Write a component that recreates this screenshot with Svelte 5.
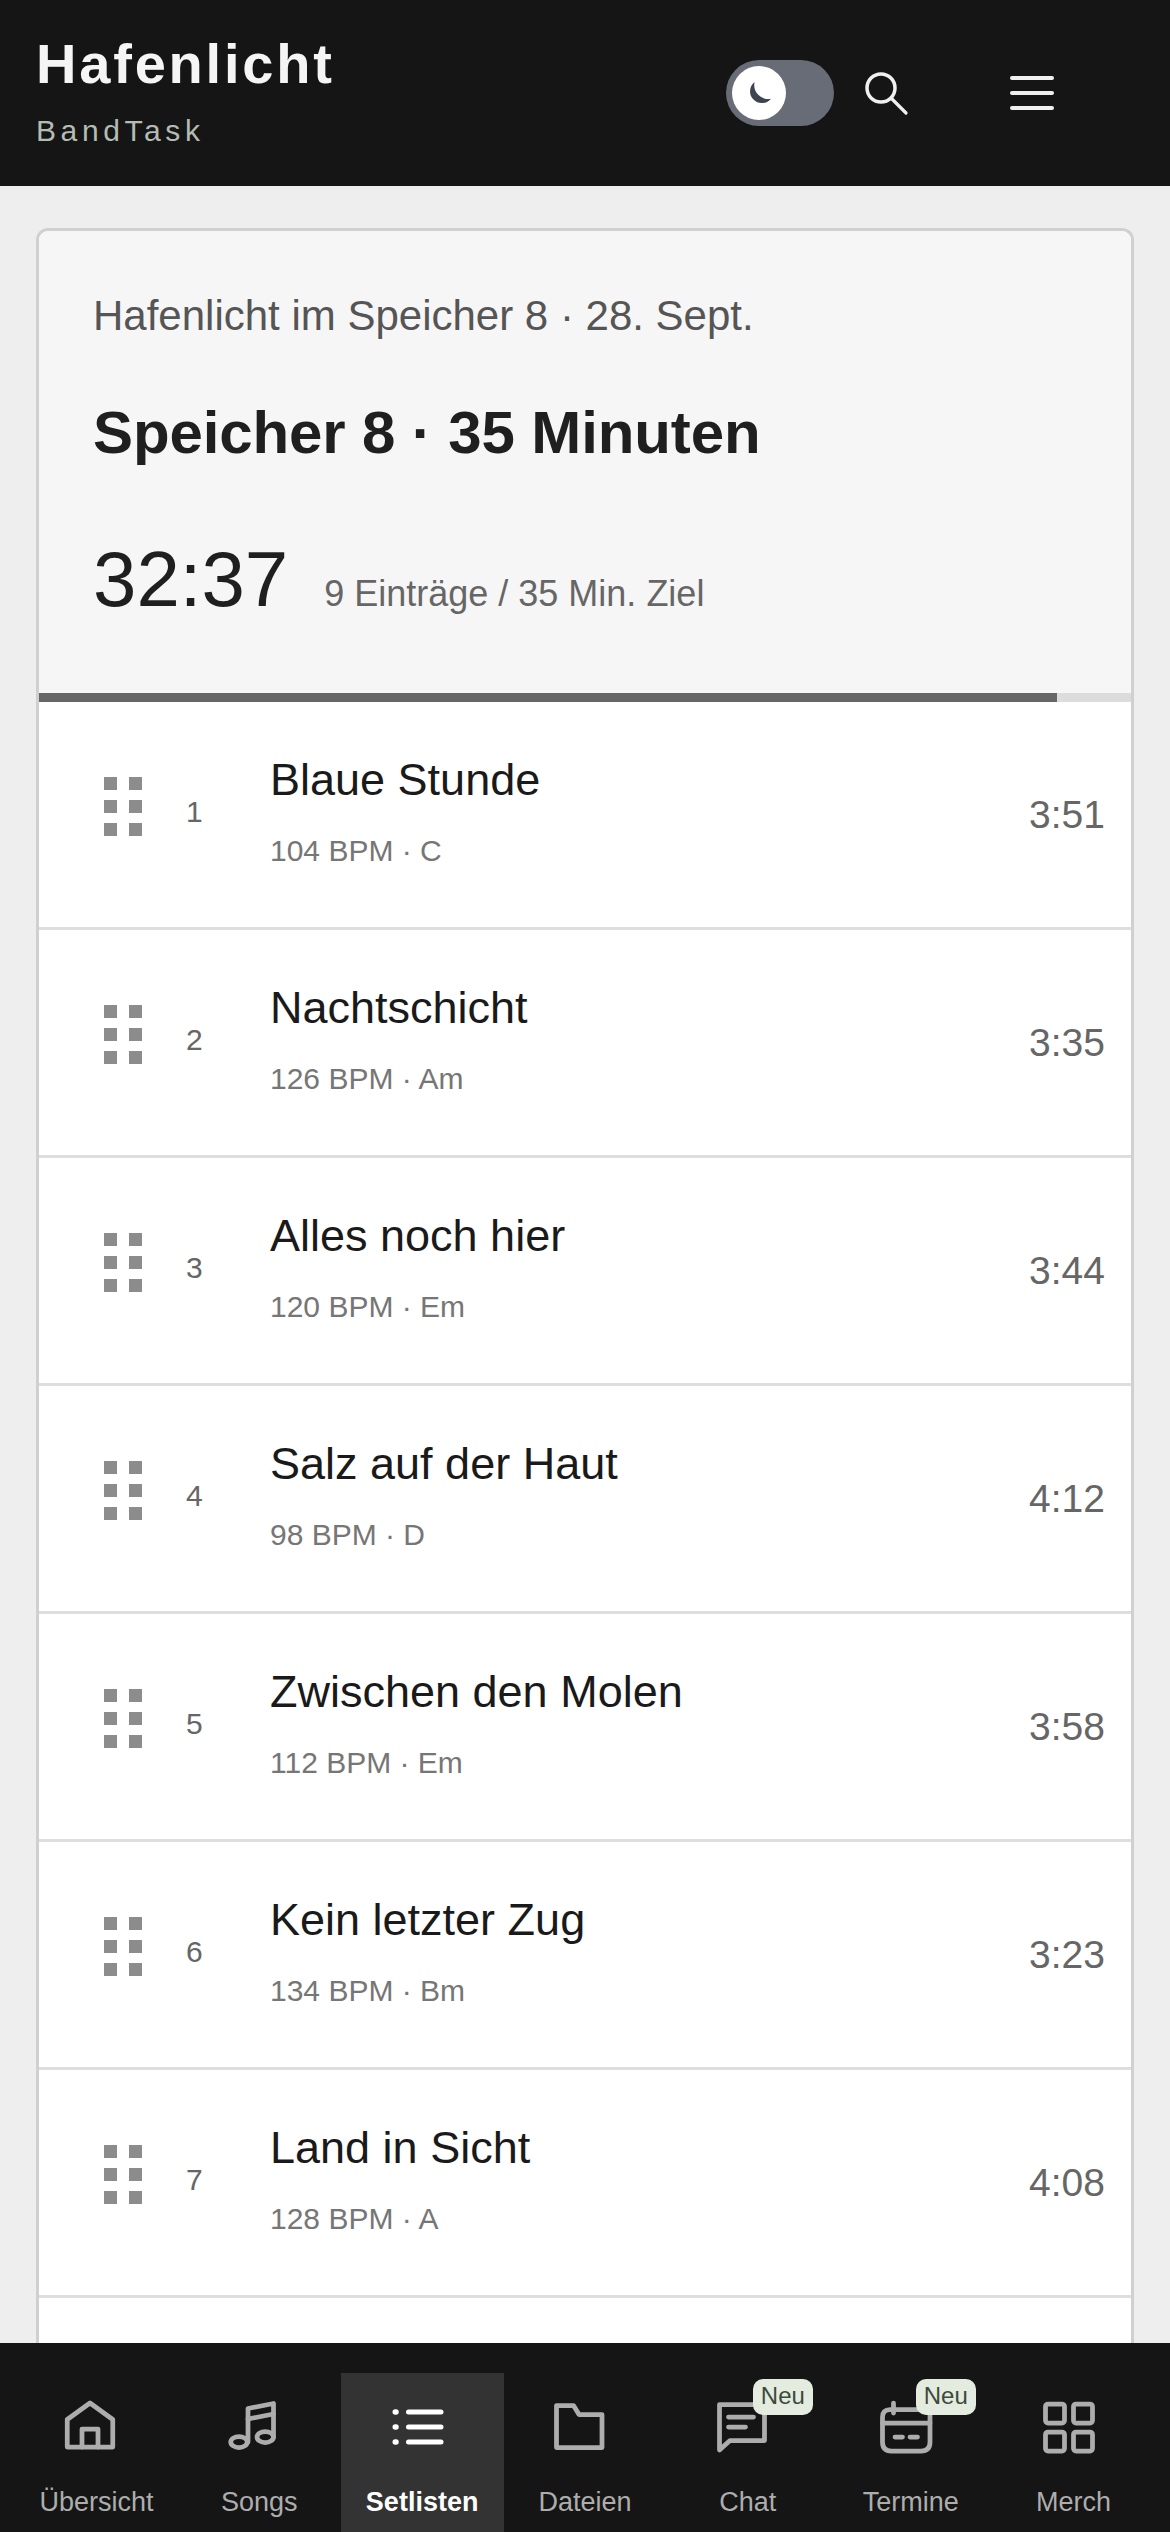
<script>
  const songs = [
    { title: "Blaue Stunde", meta: "104 BPM · C", time: "3:51" },
    { title: "Nachtschicht", meta: "126 BPM · Am", time: "3:35" },
    { title: "Alles noch hier", meta: "120 BPM · Em", time: "3:44" },
    { title: "Salz auf der Haut", meta: "98 BPM · D", time: "4:12" },
    { title: "Zwischen den Molen", meta: "112 BPM · Em", time: "3:58" },
    { title: "Kein letzter Zug", meta: "134 BPM · Bm", time: "3:23" },
    { title: "Land in Sicht", meta: "128 BPM · A", time: "4:08" }
  ];

  const tabs = [
    { id: "home", label: "Übersicht" },
    { id: "songs", label: "Songs" },
    { id: "lists", label: "Setlisten", active: true },
    { id: "files", label: "Dateien" },
    { id: "chat", label: "Chat", badge: "Neu" },
    { id: "dates", label: "Termine", badge: "Neu" },
    { id: "merch", label: "Merch" }
  ];
</script>

<div class="screen">
  <header class="top">
    <div class="brand">
      <h1>Hafenlicht</h1>
      <p>BandTask</p>
    </div>
    <button class="toggle" aria-label="Dunkelmodus">
      <span class="knob">
        <svg viewBox="0 0 24 24" width="30" height="30">
          <path d="M8.5 3.2 A9.4 9.4 0 1 0 21.6 16.5 A11 11 0 0 1 8.5 3.2 Z" fill="#3e4450" />
        </svg>
      </span>
    </button>
    <button class="icon-btn search" aria-label="Suche">
      <svg viewBox="0 0 46 46" width="46" height="46" fill="none" stroke="#f0f0f0" stroke-linecap="round">
        <circle cx="17" cy="16" r="14" stroke-width="3.5" />
        <path d="M27 26 L42 41" stroke-width="3.2" />
      </svg>
    </button>
    <button class="icon-btn menu" aria-label="Menü">
      <span></span><span></span><span></span>
    </button>
  </header>

  <main>
    <section class="card">
      <div class="head">
        <p class="event">Hafenlicht im Speicher 8 · 28. Sept.</p>
        <h2>Speicher 8 · 35 Minuten</h2>
        <div class="total">
          <strong>32:37</strong>
          <span>9 Einträge / 35 Min. Ziel</span>
        </div>
      </div>
      <div class="progress"><div class="fill" style="width: 93.2%"></div></div>

      <ul>
        {#each songs as song, i}
          <li>
            <span class="grip">
              {#each Array(6) as _}<i></i>{/each}
            </span>
            <span class="num">{i + 1}</span>
            <div class="info">
              <div class="title">{song.title}</div>
              <div class="meta">{song.meta}</div>
            </div>
            <span class="time">{song.time}</span>
          </li>
        {/each}
      </ul>
    </section>
  </main>

  <nav>
    {#each tabs as tab}
      <a href="#{tab.id}" class="tab" class:active={tab.active}>
        <span class="tab-icon">
          <svg viewBox="0 0 24 24" width="60" height="60" fill="none" stroke="currentColor" stroke-width="1.9" stroke-linecap="round" stroke-linejoin="round">
            {#if tab.id === "home"}
              <path d="M2.9 20 V9 L12 2.4 L21.1 9 V20 Z" />
              <path d="M8.8 20 V12.8 H15.2 V20" />
            {:else if tab.id === "songs"}
              <path d="M10 18 V4.6 L20.2 2.6 V16" />
              <path d="M10 8.8 L20.2 6.8" />
              <ellipse cx="6.4" cy="18" rx="3.3" ry="2.2" />
              <ellipse cx="16.9" cy="16" rx="3.3" ry="2.2" />
            {:else if tab.id === "lists"}
              <path d="M9 6 H22 M9 12 H22 M9 18 H22" stroke-width="2" />
              <path d="M3.7 6 H4 M3.7 12 H4 M3.7 18 H4" stroke-width="2.2" />
            {:else if tab.id === "files"}
              <path d="M3 3.4 H9.8 L12 7 H21.2 V20.2 H3 Z" />
            {:else if tab.id === "chat"}
              <path d="M21 3 H3 V21.2 L7.2 17.4 H21 Z" />
              <path d="M6.6 8 H16.6 M6.6 12 H13.4" />
            {:else if tab.id === "dates"}
              <path d="M22 5 H6 Q3 5 3 8 V18 Q3 21.6 6.6 21.6 H18.4 Q22 21.6 22 18 Z" />
              <path d="M3 10.4 H22 M7.4 2.4 V6.4" />
              <path d="M8 16 H11 M14 16 H17" />
            {:else}
              <rect x="3" y="2.8" width="7.6" height="7.6" rx="1" />
              <rect x="14.2" y="2.8" width="7.6" height="7.6" rx="1" />
              <rect x="3" y="14" width="7.6" height="7.6" rx="1" />
              <rect x="14.2" y="14" width="7.6" height="7.6" rx="1" />
            {/if}
          </svg>
          {#if tab.badge}<b class="badge">{tab.badge}</b>{/if}
        </span>
        <span class="label">{tab.label}</span>
      </a>
    {/each}
  </nav>
</div>

<style>
  :global(body) {
    margin: 0;
    background: #eeeeee;
  }

  .screen {
    width: 1170px;
    height: 2532px;
    display: flex;
    flex-direction: column;
    overflow: hidden;
    font-family: "Liberation Sans", Arial, sans-serif;
  }

  /* top bar */
  .top {
    height: 186px;
    flex: none;
    background: #151515;
    display: flex;
    align-items: center;
    padding: 0 36px;
    box-sizing: border-box;
  }

  .brand {
    flex: 1;
    padding-bottom: 6px;
  }

  h1 {
    margin: 0;
    font-size: 56px;
    line-height: 64px;
    font-weight: 700;
    letter-spacing: 2.8px;
    color: #f5f5f5;
  }

  .brand p {
    margin: 17px 0 0;
    font-size: 30px;
    line-height: 36px;
    letter-spacing: 4.6px;
    color: #b4bcb4;
  }

  button {
    background: none;
    border: 0;
    padding: 0;
  }

  .toggle {
    width: 108px;
    height: 66px;
    border-radius: 33px;
    background: #676c76;
    padding: 6px;
    margin-right: 30px;
    display: flex;
  }

  .knob {
    width: 54px;
    height: 54px;
    border-radius: 50%;
    background: #fff;
    display: flex;
    align-items: center;
    justify-content: center;
  }

  .icon-btn {
    display: flex;
  }

  .search {
    width: 46px;
    height: 46px;
    margin-right: 100px;
    margin-top: 4px;
  }

  .menu {
    width: 44px;
    flex-direction: column;
    gap: 11px;
    margin-right: 80px;
  }

  .menu span {
    height: 4px;
    border-radius: 2px;
    background: #f0f0f0;
  }

  /* setlist card */
  main {
    flex: 1;
    min-height: 0;
    padding: 42px 36px 0;
    display: flex;
    flex-direction: column;
  }

  .card {
    flex: 1;
    background: #fff;
    border: 3px solid #d0d0d0;
    border-bottom: 0;
    border-radius: 12px 12px 0 0;
    overflow: hidden;
  }

  .head {
    height: 462px;
    box-sizing: border-box;
    background: #f6f6f6;
    padding: 61px 54px 0;
  }

  .event {
    margin: 0;
    font-size: 42px;
    line-height: 48px;
    color: #555;
  }

  h2 {
    margin: 58px 0 0;
    font-size: 60px;
    line-height: 69px;
    font-weight: 700;
    letter-spacing: -0.12px;
    color: #1f1f1f;
  }

  .total {
    margin-top: 67px;
    display: flex;
    align-items: baseline;
    gap: 36px;
  }

  .total strong {
    font-size: 78px;
    line-height: 90px;
    font-weight: 400;
    color: #1f1f1f;
  }

  .total span {
    font-size: 36px;
    color: #666;
  }

  .progress {
    height: 9px;
    background: #dcdcdc;
  }

  .fill {
    height: 100%;
    background: #666;
  }

  ul {
    list-style: none;
    margin: 0;
    padding: 0;
  }

  li {
    height: 228px;
    box-sizing: border-box;
    border-bottom: 3px solid #dedede;
    display: flex;
    align-items: center;
    padding: 0 26px 0 65px;
  }

  .grip {
    display: grid;
    grid-template-columns: 13px 13px;
    grid-auto-rows: 13px;
    column-gap: 12px;
    row-gap: 10px;
    padding-bottom: 16px;
    width: 82px;
  }

  .grip i {
    background: #8c8c8c;
  }

  .num {
    width: 84px;
    font-size: 30px;
    color: #666;
    padding-bottom: 6px;
  }

  .info {
    flex: 1;
    padding-bottom: 8px;
  }

  .title {
    font-size: 45px;
    line-height: 52px;
    color: #1a1a1a;
  }

  .meta {
    margin-top: 28px;
    font-size: 30px;
    line-height: 34px;
    color: #767676;
  }

  .time {
    font-size: 39px;
    color: #666;
  }

  /* bottom tabs */
  nav {
    height: 189px;
    flex: none;
    box-sizing: border-box;
    background: #151515;
    padding: 30px 15px 0;
    display: grid;
    grid-template-columns: repeat(7, 1fr);
  }

  .tab {
    display: flex;
    flex-direction: column;
    align-items: center;
    padding-top: 24px;
    color: #adadad;
    text-decoration: none;
  }

  .tab.active {
    background: #333;
    color: #fff;
  }

  .tab-icon {
    position: relative;
    display: block;
    width: 60px;
    height: 60px;
    left: -6px;
  }

  .tab-icon svg {
    display: block;
  }

  .badge {
    position: absolute;
    left: 41px;
    top: -18px;
    height: 36px;
    padding: 0 8px;
    border-radius: 10px;
    background: #e4ecdf;
    color: #3d4a3d;
    font-size: 24px;
    font-weight: 400;
    line-height: 33px;
  }

  .label {
    margin-top: 27px;
    font-size: 27px;
    line-height: 36px;
    white-space: nowrap;
  }

  .active .label {
    font-weight: 700;
  }
</style>
